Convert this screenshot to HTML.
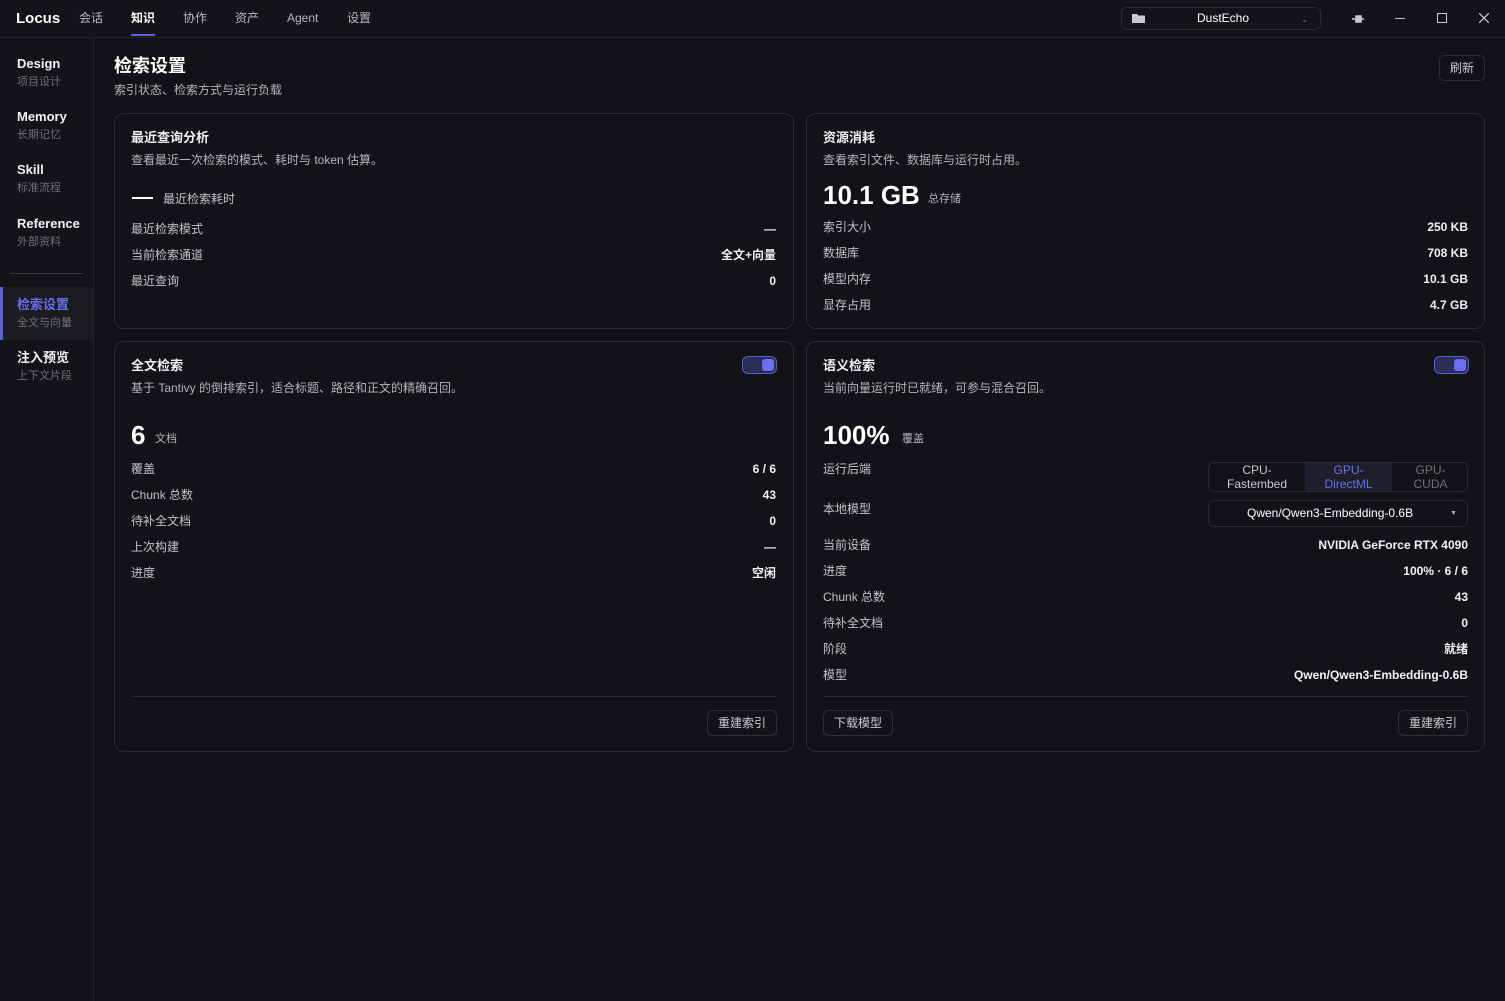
<!DOCTYPE html>
<html><head><meta charset="utf-8"><style>
*{box-sizing:border-box;margin:0;padding:0}
body{width:1505px;height:1001px;background:#111216;color:#e6e6ea;font-family:"Liberation Sans","Noto Sans CJK SC",sans-serif;position:relative;overflow:hidden;font-size:12px}
.a{position:absolute;white-space:nowrap;line-height:17px}
.top{position:absolute;left:0;top:0;width:1505px;height:38px;border-bottom:1px solid #26272d;background:#131418}
.side{position:absolute;left:0;top:38px;width:94px;height:963px;border-right:1px solid #26272d;background:#131418}
.nav{font-size:12px;color:#b8b9c0;top:10px}
.card{position:absolute;border:1px solid #2a2b31;border-radius:10px;background:#121317}
.h{font-size:13px;font-weight:bold;color:#f2f2f5}
.sub{font-size:12px;color:#b4b5bc}
.lbl{font-size:12px;color:#c2c3ca}
.val{font-size:12px;font-weight:bold;color:#f2f2f5;text-align:right}
.btn{position:absolute;border:1px solid #2e2f36;border-radius:6px;font-size:12px;color:#c9cad0;text-align:center;line-height:24px;height:26px}
.tog{position:absolute;width:35px;height:18px;border:1px solid #5a5fd0;border-radius:6px;background:#2a2d55}
.tog:after{content:"";position:absolute;right:2px;top:2px;width:12px;height:12px;border-radius:3px;background:#6a70ee}
.sd1{font-size:13px;font-weight:bold;color:#f2f2f5;left:17px}
.sd2{font-size:11px;color:#6e707a;left:17px}
</style></head><body>
<div class="top"></div>
<div class="a" style="left:16px;top:10px;font-size:15px;font-weight:bold;color:#fff">Locus</div>
<div class="a nav" style="left:79px">会话</div>
<div class="a nav" style="left:131px;color:#fff;font-weight:bold">知识</div>
<div class="a" style="left:131px;top:34px;width:24px;height:2px;background:#5b5fe0"></div>
<div class="a nav" style="left:183px">协作</div>
<div class="a nav" style="left:235px">资产</div>
<div class="a nav" style="left:287px">Agent</div>
<div class="a nav" style="left:347px">设置</div>
<div class="a" style="left:1121px;top:7px;width:200px;height:23px;border:1px solid #2a2b31;border-radius:6px"></div>
<svg class="a" style="left:1132px;top:13px" width="14" height="11"><path d="M0 1h5l1.5 1.5H13V10H0z" fill="#c8c9cf"/></svg>
<div class="a" style="left:1197px;top:10px;font-size:12px;color:#fff">DustEcho</div>
<div class="a" style="left:1301px;top:11px;font-size:8px;color:#777">⌄</div>
<svg class="a" style="left:1351px;top:13px" width="14" height="12"><path d="M1 6h4M5 3h5v6H5zM10 6h3" stroke="#c8c9cf" stroke-width="1.6" fill="#c8c9cf"/></svg>
<div class="a" style="left:1395px;top:18px;width:10px;height:1px;background:#bbb"></div>
<div class="a" style="left:1437px;top:13px;width:10px;height:10px;border:1px solid #ccc"></div>
<svg class="a" style="left:1479px;top:13px" width="10" height="10"><path d="M0 0L10 10M10 0L0 10" stroke="#ccc" stroke-width="1.2"/></svg>

<div class="side"></div>
<div class="a sd1" style="top:55px">Design</div><div class="a sd2" style="top:74px">项目设计</div>
<div class="a sd1" style="top:108px">Memory</div><div class="a sd2" style="top:127px">长期记忆</div>
<div class="a sd1" style="top:161px">Skill</div><div class="a sd2" style="top:180px">标准流程</div>
<div class="a sd1" style="top:215px">Reference</div><div class="a sd2" style="top:234px">外部资料</div>
<div class="a" style="left:10px;top:273px;width:73px;height:1px;background:#3a3b42"></div>
<div class="a" style="left:0;top:287px;width:93px;height:53px;background:#1b1c22"></div>
<div class="a" style="left:0;top:287px;width:3px;height:53px;background:#5b5fe0"></div>
<div class="a sd1" style="top:296px;color:#6a70ee">检索设置</div><div class="a sd2" style="top:315px">全文与向量</div>
<div class="a sd1" style="top:349px">注入预览</div><div class="a sd2" style="top:368px">上下文片段</div>

<div class="a" style="left:114px;top:54px;font-size:18px;font-weight:bold;color:#fff;line-height:24px">检索设置</div>
<div class="a sub" style="left:114px;top:82px">索引状态、检索方式与运行负载</div>
<div class="btn" style="left:1439px;top:55px;width:46px">刷新</div>

<!-- card1 -->
<div class="card" style="left:114px;top:113px;width:680px;height:216px"></div>
<div class="a h" style="left:131px;top:129px">最近查询分析</div>
<div class="a sub" style="left:131px;top:152px">查看最近一次检索的模式、耗时与 token 估算。</div>
<div class="a" style="left:132px;top:197px;width:21px;height:2px;background:#fff"></div>
<div class="a lbl" style="left:163px;top:191px">最近检索耗时</div>
<div class="a lbl" style="left:131px;top:221px">最近检索模式</div><div class="a val" style="right:729px;top:221px">—</div>
<div class="a lbl" style="left:131px;top:247px">当前检索通道</div><div class="a val" style="right:729px;top:247px">全文+向量</div>
<div class="a lbl" style="left:131px;top:273px">最近查询</div><div class="a val" style="right:729px;top:273px">0</div>

<!-- card2 -->
<div class="card" style="left:806px;top:113px;width:679px;height:216px"></div>
<div class="a h" style="left:823px;top:129px">资源消耗</div>
<div class="a sub" style="left:823px;top:152px">查看索引文件、数据库与运行时占用。</div>
<div class="a" style="left:823px;top:180px;font-size:26px;font-weight:bold;color:#fff;line-height:30px">10.1 GB</div>
<div class="a sub" style="left:928px;top:191px;font-size:11px">总存储</div>
<div class="a lbl" style="left:823px;top:219px">索引大小</div><div class="a val" style="right:37px;top:219px">250 KB</div>
<div class="a lbl" style="left:823px;top:245px">数据库</div><div class="a val" style="right:37px;top:245px">708 KB</div>
<div class="a lbl" style="left:823px;top:271px">模型内存</div><div class="a val" style="right:37px;top:271px">10.1 GB</div>
<div class="a lbl" style="left:823px;top:297px">显存占用</div><div class="a val" style="right:37px;top:297px">4.7 GB</div>

<!-- card3 -->
<div class="card" style="left:114px;top:341px;width:680px;height:411px"></div>
<div class="a h" style="left:131px;top:357px">全文检索</div>
<div class="tog" style="left:742px;top:356px"></div>
<div class="a sub" style="left:131px;top:380px">基于 Tantivy 的倒排索引，适合标题、路径和正文的精确召回。</div>
<div class="a" style="left:131px;top:420px;font-size:26px;font-weight:bold;color:#fff;line-height:30px">6</div>
<div class="a sub" style="left:155px;top:431px;font-size:11px">文档</div>
<div class="a lbl" style="left:131px;top:461px">覆盖</div><div class="a val" style="right:729px;top:461px">6 / 6</div>
<div class="a lbl" style="left:131px;top:487px">Chunk 总数</div><div class="a val" style="right:729px;top:487px">43</div>
<div class="a lbl" style="left:131px;top:513px">待补全文档</div><div class="a val" style="right:729px;top:513px">0</div>
<div class="a lbl" style="left:131px;top:539px">上次构建</div><div class="a val" style="right:729px;top:539px">—</div>
<div class="a lbl" style="left:131px;top:565px">进度</div><div class="a val" style="right:729px;top:565px">空闲</div>
<div class="a" style="left:131px;top:696px;width:646px;height:1px;background:#2a2b31"></div>
<div class="btn" style="left:707px;top:710px;width:70px">重建索引</div>

<!-- card4 -->
<div class="card" style="left:806px;top:341px;width:679px;height:411px"></div>
<div class="a h" style="left:823px;top:357px">语义检索</div>
<div class="tog" style="left:1434px;top:356px"></div>
<div class="a sub" style="left:823px;top:380px">当前向量运行时已就绪，可参与混合召回。</div>
<div class="a" style="left:823px;top:420px;font-size:26px;font-weight:bold;color:#fff;line-height:30px">100%</div>
<div class="a sub" style="left:902px;top:431px;font-size:11px">覆盖</div>
<div class="a lbl" style="left:823px;top:461px">运行后端</div>
<div class="a" style="left:1208px;top:462px;width:260px;height:30px;border:1px solid #2a2b31;border-radius:6px;overflow:hidden;font-size:12px;text-align:center">
 <div class="a" style="left:0;top:0;width:96px;height:28px;color:#c8c9cf;line-height:14px">CPU-<br>Fastembed</div>
 <div class="a" style="left:96px;top:0;width:87px;height:28px;background:#1d1f2c;color:#6a70ee;line-height:14px">GPU-<br>DirectML</div>
 <div class="a" style="left:183px;top:0;width:77px;height:28px;color:#6e707a;line-height:14px">GPU-<br>CUDA</div>
</div>
<div class="a lbl" style="left:823px;top:501px">本地模型</div>
<div class="a" style="left:1208px;top:500px;width:260px;height:27px;border:1px solid #2a2b31;border-radius:6px"></div>
<div class="a" style="left:1247px;top:505px;font-size:12px;color:#fff">Qwen/Qwen3-Embedding-0.6B</div>
<div class="a" style="left:1450px;top:505px;font-size:7px;color:#aaa">▼</div>
<div class="a lbl" style="left:823px;top:537px">当前设备</div><div class="a val" style="right:37px;top:537px">NVIDIA GeForce RTX 4090</div>
<div class="a lbl" style="left:823px;top:563px">进度</div><div class="a val" style="right:37px;top:563px">100% · 6 / 6</div>
<div class="a lbl" style="left:823px;top:589px">Chunk 总数</div><div class="a val" style="right:37px;top:589px">43</div>
<div class="a lbl" style="left:823px;top:615px">待补全文档</div><div class="a val" style="right:37px;top:615px">0</div>
<div class="a lbl" style="left:823px;top:641px">阶段</div><div class="a val" style="right:37px;top:641px">就绪</div>
<div class="a lbl" style="left:823px;top:667px">模型</div><div class="a val" style="right:37px;top:667px">Qwen/Qwen3-Embedding-0.6B</div>
<div class="a" style="left:823px;top:696px;width:645px;height:1px;background:#2a2b31"></div>
<div class="btn" style="left:823px;top:710px;width:70px">下载模型</div>
<div class="btn" style="left:1398px;top:710px;width:70px">重建索引</div>
</body></html>
